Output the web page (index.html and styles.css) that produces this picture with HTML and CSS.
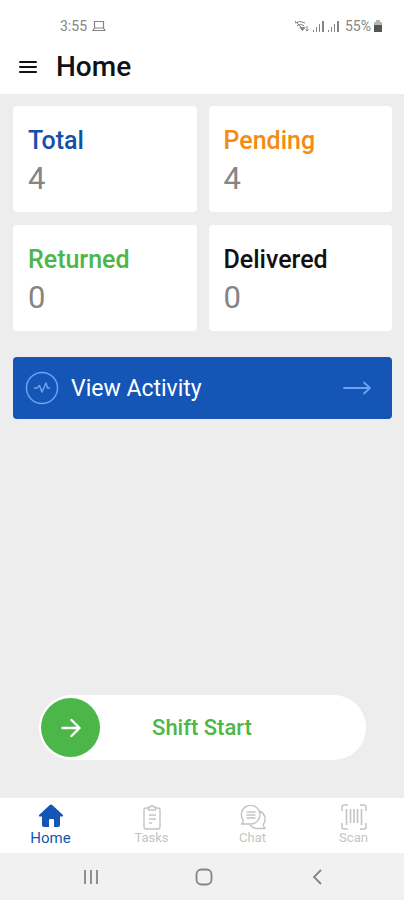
FILE: index.html
```html
<!DOCTYPE html>
<html lang="en">
<head>
<meta charset="utf-8">
<meta name="viewport" content="width=device-width, initial-scale=1">
<title>Home</title>
<link rel="stylesheet" href="styles.css">
</head>
<body>
<div class="status">
  <div class="status-group">
    <span>3:55</span>
    <svg width="14" height="12" viewBox="0 0 14 12" fill="none" stroke="currentColor" stroke-width="1.200"><path d="M2.500 8V1.500h9V8M1 10.500h12L11.500 8h-9z"/></svg>
  </div>
  <div class="status-group status-right">
    <svg width="16" height="12" viewBox="0 0 16 12" fill="none" stroke="currentColor"><path d="M1 3q5-3 10 0M3 5.500q3-2 7 0M1 1l8 8"/><path d="M6 7.500l2.500 3L11 7.500z" fill="currentColor"/><path d="M13 6v5M11.500 9.500l1.500 1.500 1.500-1.500"/></svg>
    <svg width="12" height="12" viewBox="0 0 12 12" fill="currentColor"><path d="M0 10h1v2H0zM3 7h1v5H3zM6 4h1v8H6zM9 1h2v11H9z"/></svg>
    <svg width="12" height="12" viewBox="0 0 12 12" fill="currentColor"><path d="M0 10h1v2H0zM3 7h1v5H3zM6 4h1v8H6zM9 1h2v11H9z"/></svg>
    <span class="percent">55%</span>
    <svg width="8" height="12" viewBox="0 0 8 12"><path d="M2 0h4v2h2v4H0V2h2z" fill="#b5b5b5"/><path d="M0 5h8v7H0z" fill="#555"/></svg>
  </div>
</div>
<header class="header">
  <button class="menu" aria-label="Menu"><svg width="20" height="14" viewBox="0 0 20 14" stroke="currentColor" stroke-width="2" stroke-linecap="round"><path d="M2 2h16M2 7h16M2 12h16"/></svg></button>
  <h1>Home</h1>
</header>
<main class="main">
  <section class="cards">
    <article class="card"><h2 class="blue">Total</h2><p>4</p></article>
    <article class="card"><h2 class="orange">Pending</h2><p>4</p></article>
    <article class="card"><h2 class="green">Returned</h2><p>0</p></article>
    <article class="card"><h2>Delivered</h2><p>0</p></article>
  </section>
  <button class="activity">
    <svg width="34" height="34" viewBox="0 0 34 34" fill="none" stroke="currentColor" stroke-width="1.500" stroke-linejoin="round" stroke-linecap="round"><circle cx="17" cy="17" r="15.500"/><path d="M9.500 17h2.500l2.500-2.500L17 21l4-9 1.500 5H24.500"/></svg>
    <span>View Activity</span>
    <svg class="go" width="28" height="14" viewBox="0 0 28 14" fill="none" stroke="currentColor" stroke-width="1.800" stroke-linecap="round" stroke-linejoin="round"><path d="M1 7h26M21 1.500L27 7l-6 5.500"/></svg>
  </button>
  <button class="shift">
    <span class="knob"><svg width="20" height="20" viewBox="0 0 20 20" fill="none" stroke="currentColor" stroke-width="2.400" stroke-linecap="round" stroke-linejoin="round"><path d="M1.500 10h17M10.500 2l8 8-8 8"/></svg></span>
    <span class="shift-label">Shift Start</span>
  </button>
</main>
<nav class="tabs">
  <a class="tab active" href="#home">
    <svg width="26" height="26" viewBox="0 0 26 26" fill="currentColor"><path d="M11.800 1Q13 0 14.200 1L25 11q.8 1.500-1 1.500h-2V21q0 2-2 2h-4v-7q0-1-1-1h-3q-1 0-1 1v7H6q-2 0-2-2v-8.500H2q-1.800 0-1-1.500z"/></svg>
    <span>Home</span>
  </a>
  <a class="tab" href="#tasks">
    <svg width="26" height="26" viewBox="0 0 26 26" fill="none" stroke="currentColor" stroke-width="1.400" stroke-linejoin="round"><path d="M9.500 4H7q-2 0-2 2v17q0 2 2 2h12q2 0 2-2V6q0-2-2-2h-2.500M9.500 3h2q1.500-3 3 0h2v3h-7zM10 11h7M10 15h7M10 19h3"/></svg>
    <span>Tasks</span>
  </a>
  <a class="tab" href="#chat">
    <svg width="26" height="26" viewBox="0 0 26 26" fill="none" stroke="currentColor" stroke-width="1.400" stroke-linejoin="round" stroke-linecap="round"><path d="M3 16A9.300 9.300 0 1 1 11 20H1.500q2-1.700 1.500-4zM7 8h8M7 11h8M7 14h8M19.500 7a8.500 8.500 0 0 1 4 13q-.5 2.500 1.500 4.500h-8q-4 .2-6.500-3"/></svg>
    <span>Chat</span>
  </a>
  <a class="tab" href="#scan">
    <svg width="26" height="26" viewBox="0 0 26 26" fill="none" stroke="currentColor" stroke-width="1.500"><path d="M1 7V3q0-2 2-2h4M19 1h4q2 0 2 2v4M25 19v4q0 2-2 2h-4M7 25H3q-2 0-2-2v-4"/><path d="M5.500 5v16M9.500 5v14M13 5v14M16.500 5v14M20.500 5v16" stroke-width="1.600"/></svg>
    <span>Scan</span>
  </a>
</nav>
<div class="system">
  <button aria-label="Recent apps"><svg width="18" height="18" viewBox="0 0 18 18" stroke="currentColor" stroke-width="1.800"><path d="M3 2v14M9 2v14M15 2v14"/></svg></button>
  <button aria-label="Home screen"><svg width="18" height="18" viewBox="0 0 18 18" fill="none" stroke="currentColor" stroke-width="1.800"><rect x="1.500" y="1.500" width="15" height="15" rx="5"/></svg></button>
  <button aria-label="Back"><svg width="18" height="18" viewBox="0 0 18 18" fill="none" stroke="currentColor" stroke-width="1.800"><path d="M13 2L6 9l7 7"/></svg></button>
</div>
</body>
</html>
```
FILE: styles.css
```css
* { box-sizing: border-box; }
body {
  margin: 0;
  min-height: 100vh;
  display: flex;
  flex-direction: column;
  background: #ededed;
  color: #111;
  font-family: Roboto, sans-serif;
}
h1, h2, p { margin: 0; font-weight: 500; }
button { border: 0; padding: 0; background: none; color: inherit; font: inherit; }
svg { display: block; flex: none; }

.status {
  display: flex;
  justify-content: space-between;
  align-items: center;
  height: 40px;
  padding: 12px 22px 0 60px;
  background: #fff;
  color: #858585;
  font-size: 14px;
}
.status-group { display: flex; align-items: center; gap: 5px; }
.status-right { gap: 3px; }
.percent { padding-left: 2px; }

.header {
  display: flex;
  align-items: center;
  gap: 18px;
  height: 54px;
  padding: 0 18px;
  background: #fff;
}
.menu { color: #111; }
.header h1 { font-size: 28px; line-height: 32px; }

.main { flex: 1; display: flex; flex-direction: column; padding: 12px 12px 38px 13px; }
.cards { display: grid; grid-template-columns: 1fr 1fr; gap: 13px 12px; }
.card { padding: 19px 15px 11px; background: #fff; border-radius: 4px; }
.card h2 { font-size: 25px; line-height: 32px; }
.card p { font-size: 31px; line-height: 44px; font-weight: 400; color: #858585; }
.card .blue { color: #1450ab; }
.card .orange { color: #f28c14; }
.card .green { color: #4cb748; }

.activity {
  display: flex;
  align-items: center;
  gap: 12px;
  height: 62px;
  margin-top: 26px;
  padding: 0 21px 0 12px;
  border-radius: 4px;
  background: #1555b5;
  color: #6da2f0;
}
.activity span { color: #fff; font-size: 23px; }
.go { margin-left: auto; }

.shift {
  display: flex;
  align-items: center;
  height: 65px;
  margin: auto 26px 0;
  padding: 0 3px 0 2px;
  border-radius: 33px;
  background: #fff;
  color: #4cb748;
}
.knob {
  display: grid;
  place-items: center;
  width: 59px;
  height: 59px;
  border-radius: 50%;
  background: #4cb748;
  color: #fff;
}
.shift-label { flex: 1; padding-right: 59px; text-align: center; font-size: 22px; font-weight: 500; }

.tabs { display: grid; grid-template-columns: repeat(4, 1fr); height: 55px; background: #fff; }
.tab {
  display: flex;
  flex-direction: column;
  align-items: center;
  padding-top: 6px;
  color: #c4c4c4;
  font-size: 13px;
  line-height: 16px;
  text-decoration: none;
}
.active { color: #1555b5; font-size: 15px; }

.system {
  display: flex;
  justify-content: center;
  gap: 95px;
  height: 47px;
  padding-left: 3px;
  background: #f1f1f1;
  color: #858585;
}
```
